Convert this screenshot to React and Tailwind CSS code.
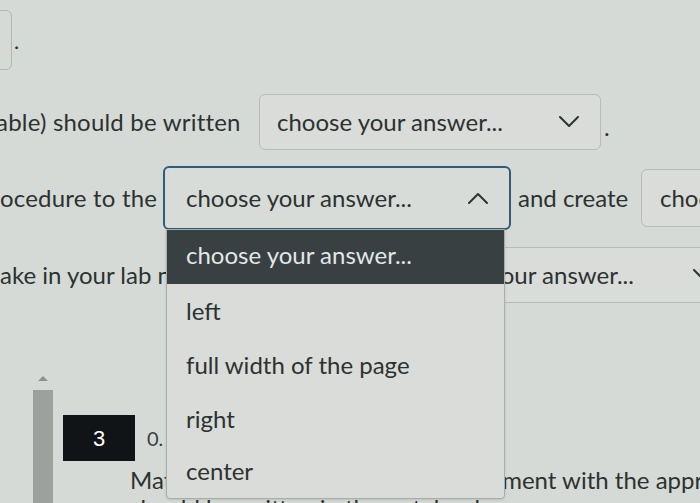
import React from "react";

const Chevron = ({ up = false, className = "" }) => (
  <svg width="22" height="12" viewBox="0 0 22 12" className={className} fill="none">
    <path
      d={up ? "M2 11 L11 2 L20 11" : "M2 1 L11 10 L20 1"}
      stroke="#2f3533"
      strokeWidth="2"
      strokeLinecap="round"
      strokeLinejoin="round"
    />
  </svg>
);

export default function App() {
  return (
    <div
      className="relative w-[700px] h-[503px] overflow-hidden bg-[#d6dad7] text-[#2c3230]"
      style={{ fontFamily: "Lato, 'Open Sans', sans-serif" }}
    >
      {/* top fragment */}
      <div className="flex items-end h-[70px] pt-[10px]">
        <div className="w-[18px] h-[60px] -ml-[6px] border border-[#b3b8b5] rounded-md shrink-0" />
        <span className="ml-[2px] mb-[18px] text-[22px] leading-none">.</span>
      </div>

      {/* row 1 */}
      <div className="flex items-center mt-[24px] h-[56px] text-[24px] whitespace-nowrap">
        <span className="-ml-[4px] w-[263px] shrink-0 tracking-[0.2px]">able) should be written</span>
        <div className="flex items-center justify-between w-[342px] h-[56px] pl-[17px] pr-[20px] border border-[#b7bcb9] rounded-md bg-[#d9dcd9] shrink-0">
          <span>choose your answer...</span>
          <Chevron />
        </div>
        <span className="ml-[3px] mt-[10px]">.</span>
      </div>

      {/* row 2 */}
      <div className="flex items-center mt-[16px] h-[64px] text-[24px] whitespace-nowrap">
        <span className="w-[163px] shrink-0 tracking-[0.2px]">ocedure to the</span>
        <div className="flex items-center justify-between w-[348px] h-[64px] pl-[21px] pr-[20px] border-2 border-[#2d5d78] rounded-md bg-[#d8dcd9] shrink-0">
          <span>choose your answer...</span>
          <Chevron up />
        </div>
        <span className="ml-[7px] w-[123px] shrink-0">and create</span>
        <div className="flex items-center w-[100px] h-[58px] pl-[18px] border border-[#b7bcb9] rounded-md bg-[#d9dcd9] shrink-0">
          <span>choose</span>
        </div>
      </div>

      {/* row 3 */}
      <div className="flex items-center mt-[17px] h-[56px] text-[24px] whitespace-nowrap">
        <span className="w-[389px] shrink-0">ake in your lab notebook</span>
        <div className="flex items-center justify-between w-[346px] h-[56px] pl-[18px] pr-[20px] border border-[#b7bcb9] rounded-md bg-[#d9dcd9] shrink-0">
          <span>choose your answer...</span>
          <Chevron />
        </div>
      </div>

      {/* lower section */}
      <div className="flex mt-[73px] h-[130px]">
        <div className="flex flex-col items-center w-[60px] pl-[26px] shrink-0">
          <div className="w-0 h-0 border-l-[5px] border-r-[5px] border-b-[5px] border-l-transparent border-r-transparent border-b-[#8e928f]" />
          <div className="mt-[9px] w-[20px] flex-1 bg-[#9da19e]" />
        </div>
        <div className="flex flex-col ml-[3px]">
          <div className="flex items-center mt-[39px]">
            <div
              className="flex items-center justify-center w-[72px] h-[46px] bg-[#111416] text-white text-[22px]"
              style={{ fontFamily: "'Liberation Sans', Arial, sans-serif" }}
            >
              3
            </div>
            <span className="ml-[12px] text-[20px] text-[#3a403e]">0.</span>
          </div>
          <div className="ml-[67px] mt-[5px] text-[24px] leading-[28px] whitespace-nowrap">
            Match each type of graphic arrangement with the appropriate
          </div>
          <div className="ml-[67px] text-[24px] leading-[28px] whitespace-nowrap">
            should be written in the notebook
          </div>
        </div>
      </div>

      {/* dropdown menu overlay */}
      <div className="absolute left-[166px] top-[229px] w-[339px] h-[270px] bg-[#d9dcd9] border border-[#a9aeab] rounded-b-sm text-[24px] shadow-sm">
        <div className="flex items-center h-[54px] pl-[19px] pb-[4px] bg-[#384042] text-[#e3e7e5]">
          choose your answer...
        </div>
        <div className="flex items-center h-[54px] pl-[19px]">left</div>
        <div className="flex items-center h-[54px] pl-[19px]">full width of the page</div>
        <div className="flex items-center h-[54px] pl-[19px]">right</div>
        <div className="flex items-center h-[54px] pl-[19px] pb-[4px]">center</div>
      </div>
    </div>
  );
}
